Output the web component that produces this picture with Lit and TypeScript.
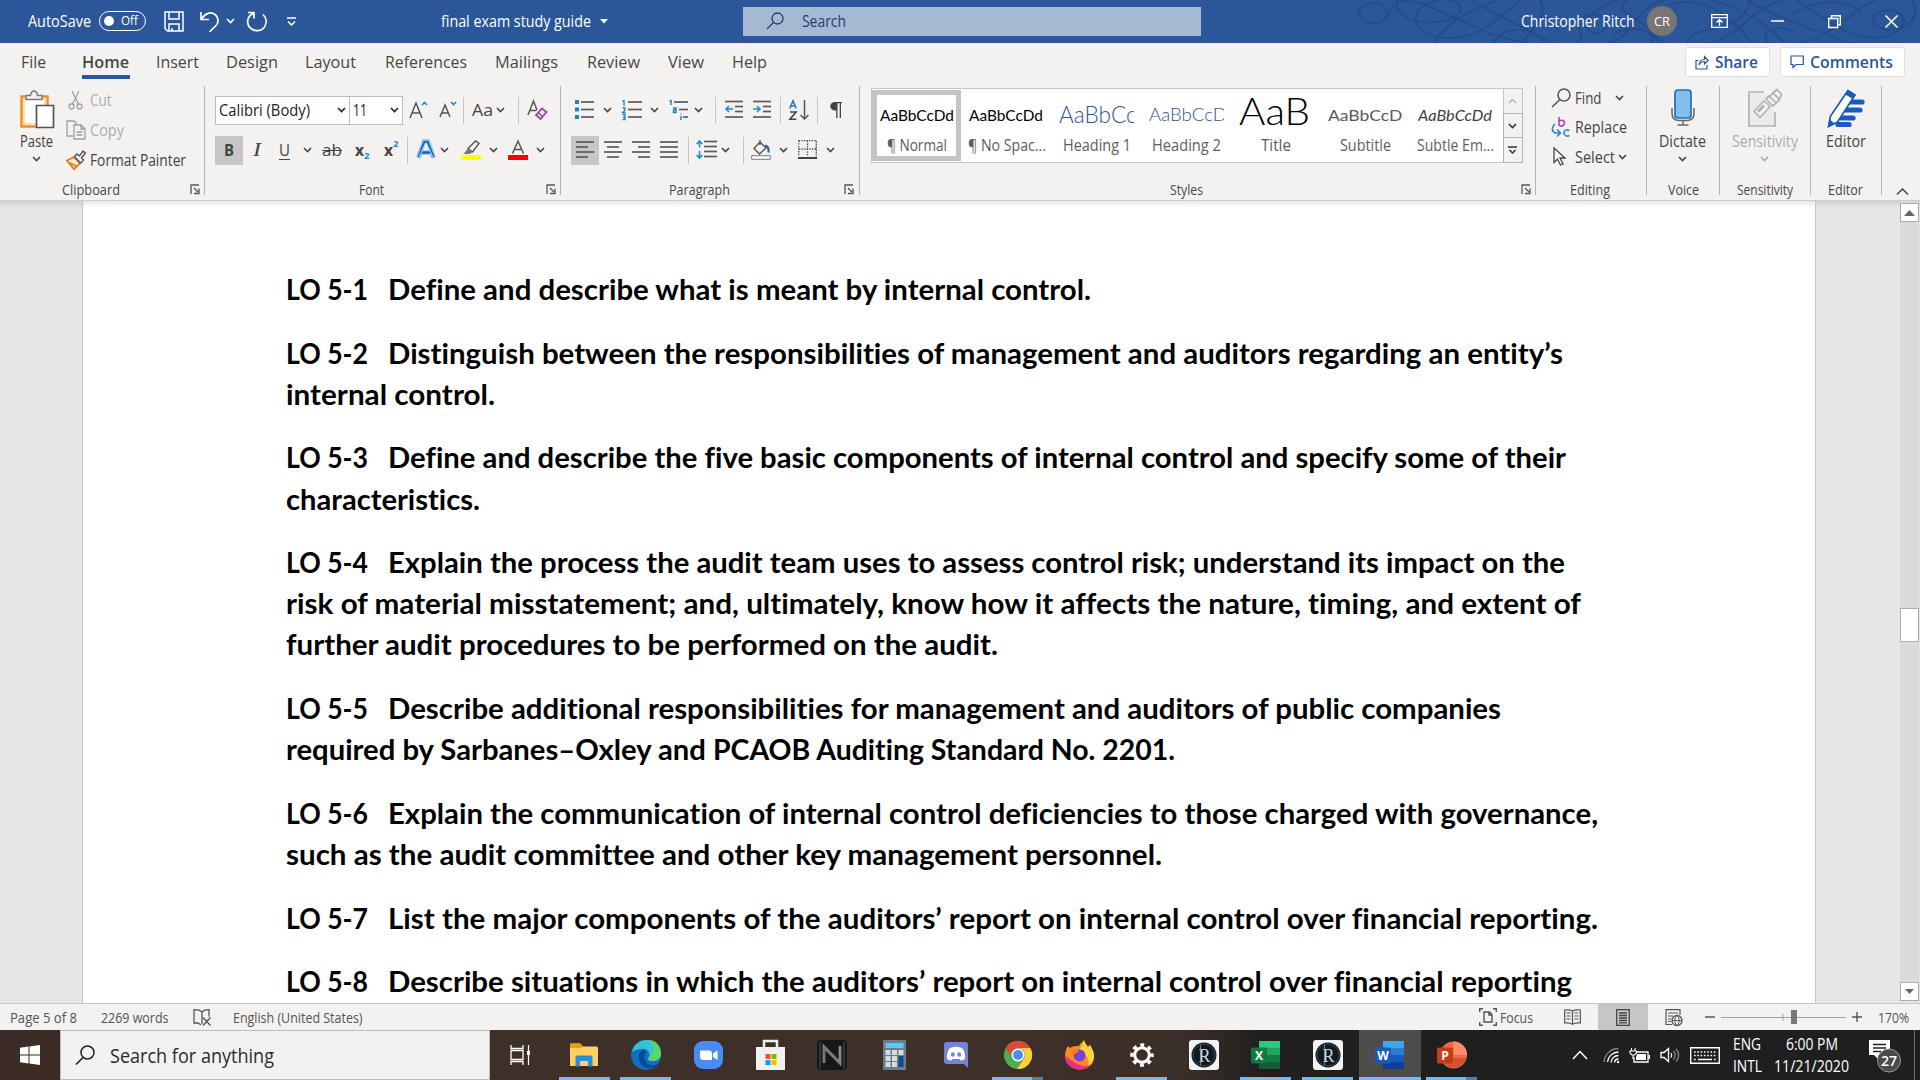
import { LitElement, html, svg, css, unsafeCSS } from "lit";
import { customElement, property, query } from "lit/decorators.js";

/** Grid columns whose items begin at the given x positions, relative to the row's left edge. */
const starts = (...xs: number[]) =>
  unsafeCSS(
    `padding-left:${xs[0]}px;grid-template-columns:${xs
      .slice(1)
      .map((x, i) => `${+(x - xs[i]).toFixed(2)}px`)
      .join(" ")} auto;`
  );

const ic = (w: number, h: number, body: unknown, cls = "") =>
  html`<svg class=${"ic " + cls} width=${w} height=${h} viewBox="0 0 ${w} ${h}" fill="none">${body}</svg>`;

const t = (text: string, w: number, cls = "") => html`<fit-text class=${cls} .w=${w} .text=${text}></fit-text>`;

const chev = (cls = "") => ic(9, 6, svg`<path d="M1 1l3.500 3.500L8 1" stroke="currentColor" stroke-width="1.6"/>`, "chev " + cls);
const launcher = ic(10, 11, svg`<path d="M1 10V1h8M4 4l4 4M9 4.500v5H4" stroke="#555" stroke-width="1.300"/>`);
const sep = html`<i class="sep"></i>`;
const lines = (ls: number[][], c = "#5c5a58") =>
  svg`${ls.map(([x1, x2, y]) => svg`<path d="M${x1} ${y}H${x2}" stroke=${c} stroke-width="1.700"/>`)}`;

/** A single line of text set to an exact advance width. */
@customElement("fit-text")
class FitText extends LitElement {
  @property({ attribute: false }) w = 0;
  @property({ attribute: false }) text = "";
  @query("span") span!: HTMLSpanElement;
  static styles = css`
    :host { display: block; white-space: pre; flex: none; }
    span { display: inline-block; transform-origin: 0 50%; }
    :host(.u) span { text-decoration: underline; text-underline-offset: 3px; }
    :host(.s) span { text-decoration: line-through; }
  `;
  render() {
    return html`<span>${this.text}</span>`;
  }
  updated() {
    this.style.width = this.w + "px";
    this.span.style.transform = "none";
    const natural = this.span.getBoundingClientRect().width;
    if (natural) this.span.style.transform = `scaleX(${this.w / natural})`;
  }
}

const base = css`
  :host { display: block; font-family: "Open Sans", "Noto Sans", sans-serif; font-size: 15.8px; color: #444; }
  * { box-sizing: border-box; }
  .ic { display: block; flex: none; overflow: visible; }
  .row { display: grid; align-items: center; }
  .sep { display: block; width: 1px; height: 27px; background: #c8c6c4; }
`;

@customElement("title-bar")
class TitleBar extends LitElement {
  static styles = [
    base,
    css`
      :host { position: relative; height: 43px; background: #2b579a; color: #fff; font-size: 15.5px; }
      .swirl { position: absolute; right: 0; top: 0; width: 720px; height: 43px; }
      .row { position: relative; height: 42px; ${starts(28, 99, 164, 200, 226, 246, 286, 441, 600, 743, 1520.5, 1647, 1711, 1771, 1828, 1884.5)} }
      .row > fit-text { margin-top: -1px; }
      .toggle { width: 47px; height: 20px; border: 1.5px solid #fff; border-radius: 11px; display: flex; align-items: center; gap: 7px; padding-left: 4px; font-size: 12.5px; margin-top: -1px; }
      .knob { width: 10px; height: 10px; border-radius: 50%; background: #fff; }
      .search { width: 458px; height: 29px; background: #a6b9d3; display: flex; align-items: center; gap: 18px; padding-left: 23px; padding-bottom: 1px; color: #1d3e72; margin-top: 1px; }
      .avatar { width: 30px; height: 30px; border-radius: 50%; background: #7a7574; display: flex; align-items: center; justify-content: center; font-size: 13.5px; }
    `,
  ];
  render() {
    return html`
      <svg class="swirl" viewBox="0 0 1568 129" preserveAspectRatio="none" fill="none" stroke="#244c87" stroke-width="5">
        <path d="M405 40c0-45-58-38-58 0s50 42 62 2c10-34 30-50 75-30 90 45 130 95 230 117"/>
        <path d="M430 0c-10 60 60 80 110 60 55-25 20-75-25-60-45 20-60 60-30 90 40 40 110 30 160-30l55-60"/>
        <path d="M510 129c20-50 60-90 140-129M590 0c80 60 120 90 180 129M700 129c30-50 60-90 40-129M640 129c10-45 90-60 110 0"/>
        <path d="M820 129c30-30-20-60 20-80s60 30 30 50c-30 10-60-50 40-99M890 129c60-20 40-90 120-129"/>
        <path d="M930 0c-40 50 40 40 70 129M900 110c30-50 110-10 80 19M1010 20c70-40 140 10 190 109M1060 129c10-60 120-20 140-129"/>
        <path d="M1110 0c60 20 130 70 160 129M1270 0c-80 30-70 90-160 129M1190 0c30 30 160 100 230 129M1235 129c-20-45 40-60 60-30"/>
        <path d="M1300 0c60 60 130 129 190 110 60-20 50-80 10-80s-50 50 0 60c50 0 70-50 50-90M1470 0c-60 40-110 129-170 129M1290 40c60-50 130-40 150 0"/>
      </svg>
      <div class="row">
        ${t("AutoSave", 63)}
        <div class="toggle"><i class="knob"></i>${t("Off", 17)}</div>
        ${ic(20, 21, svg`<path d="M1 1h18v19H3.500L1 17.500zM5 1v7h10V1M5 20v-7h10v7" stroke="#fff" stroke-width="1.500"/><path d="M8 20v-3" stroke="#fff" stroke-width="1.500"/>`)}
        ${ic(19, 21, svg`<path d="M1 1v7.500h8M1.500 8C5 2 11 .5 15 3.500s4 8 1 11L9.500 21" stroke="#fff" stroke-width="1.700"/>`)}
        ${chev()}
        ${ic(22, 21, svg`<path d="M2 1.500h6v6M7.500 2.200C2 4.500.5 10 2.500 14.500c3 6 12 7 16 1.500 2.500-4 2.200-9-1.500-12.500" stroke="#fff" stroke-width="1.700"/>`)}
        ${ic(11, 9, svg`<path d="M1 1h9M2 4.500l3.500 3.500L9 4.500" stroke="#fff" stroke-width="1.400"/>`)}
        ${t("final exam study guide", 150)}
        ${ic(8, 5, svg`<path d="M0 0h8L4 4.500z" fill="#fff"/>`)}
        <div class="search">
          ${ic(18, 18, svg`<circle cx="11.500" cy="6.500" r="5.500" stroke="#1d3e72" stroke-width="1.300"/><path d="M7.500 10.500L1 17" stroke="#1d3e72" stroke-width="1.300"/>`)}
          ${t("Search", 44)}
        </div>
        ${t("Christopher Ritch", 113.5)}
        <div class="avatar">${t("CR", 16)}</div>
        ${ic(17, 14, svg`<path d="M.7.7h15.600v12.600H.7zM.7 3.700h15.600M8.500 12V6M5.500 8.500l3-3 3 3" stroke="#fff" stroke-width="1.300"/>`)}
        ${ic(13, 2, svg`<path d="M0 1h13" stroke="#fff" stroke-width="1.500"/>`)}
        ${ic(13, 13, svg`<path d="M.7 3.500h9v9h-9zM3.500 3.500V.7h8.800v9H9.700" stroke="#fff" stroke-width="1.400"/>`)}
        ${ic(13, 13, svg`<path d="M.5.5l12 12M12.500.5l-12 12" stroke="#fff" stroke-width="1.500"/>`)}
      </div>
    `;
  }
}

@customElement("tab-strip")
class TabStrip extends LitElement {
  static styles = [
    base,
    css`
      :host { height: 39px; font-size: 16.6px; color: #484644; }
      .row { height: 38px; ${starts(21, 82, 156, 226, 305, 385, 495, 587, 668, 732, 1685, 1780)} }
      .on, .tab { margin-top: -2px; }
      .on { font-weight: 600; display: flex; flex-direction: column; position: relative; }
      .on::after { content: ""; position: absolute; left: 0; bottom: -6px; width: 48px; height: 4px; background: #2b579a; }
      .btn { height: 30px; background: #fff; border: 1px solid #e1dfdd; border-radius: 3px; display: flex; align-items: center; gap: 6px; padding-left: 9px; color: #2b579a; font-weight: 600; font-size: 16px; }
      .btn fit-text { margin-top: -1px; }
      .share { width: 85px; }
      .comments { width: 125px; }
    `,
  ];
  render() {
    const tabs: [string, number][] = [["File", 25], ["Home", 47], ["Insert", 43], ["Design", 52], ["Layout", 51], ["References", 82], ["Mailings", 63], ["Review", 53], ["View", 36], ["Help", 35]];
    return html`<div class="row">
      ${tabs.map(([n, w]) => html`<div class=${n === "Home" ? "on" : "tab"}>${t(n, w)}</div>`)}
      <div class="btn share">
        ${ic(14, 15, svg`<path d="M3.500 5.500H1V14h11v-4M4 10c.5-4 3-5.500 5.500-5.500V1.500L13.200 5.500 9.500 9V6.500C7 6.500 5.500 7.500 4 10z" stroke="#2b579a" stroke-width="1.200"/>`)}${t("Share", 43)}
      </div>
      <div class="btn comments">
        ${ic(14, 14, svg`<path d="M1 1h12.300v8.500H6L3 12.500v-3H1z" stroke="#2b579a" stroke-width="1.200"/>`)}${t("Comments", 83)}
      </div>
    </div>`;
  }
}

@customElement("ribbon-body")
class RibbonBody extends LitElement {
  static styles = [
    base,
    css`
      :host { height: 118px; padding-top: 4px; border-bottom: 0; font-size: 15.6px; }
      .groups { display: grid; height: 109px; grid-template-columns: 205px 356px 298.500px 676.500px 110.500px 73px 91.500px 71px auto; }
      .group { border-right: 1px solid #b8b6b4; display: grid; grid-template-rows: 95px 13px; min-width: 0; }
      .last { border: 0; display: flex; align-items: flex-end; padding: 0 0 0 14px; }
      .label { display: flex; height: 17px; align-items: center; font-size: 13.7px; color: #4a4846; }
      .c1 { padding-left: 62px; } .c2 { padding-left: 154px; } .c3 { padding-left: 108px; } .c4 { padding-left: 310px; }
      .c5 { padding-left: 34px; } .c6 { padding-left: 21px; } .c7 { padding-left: 17px; } .c8 { padding-left: 17px; }
      .label .ic { margin-left: auto; margin-right: 4.500px; }
      .clip { display: grid; grid-template-columns: 66px auto; }
      .big { display: flex; flex-direction: column; align-items: center; }
      .paste { padding: 4px 0 0 7px; }
      .big fit-text { height: 20px; line-height: 20px; }
      .clipboard { margin-bottom: 3px; }
      .big .chev { margin-top: 5px; }
      .mini { margin-top: -1px; height: 90px; display: grid; grid-template-rows: repeat(3, 30px); }
      .mini .row { ${starts(0, 24)} }
      .off { color: #aeacaa; }
      .two { padding-top: 10px; display: grid; grid-template-rows: 29px 29px; row-gap: 11px; }
      .two .row > .ic, .two .row > fit-text, .x { margin-top: -1.500px; }
      .two .row > .chev { margin-left: -1px; }
      .f1 { ${starts(10, 144, 203.5, 233.5, 258, 267, 292, 313, 321.5)} }
      .f2 { ${starts(10, 48, 74, 99, 117, 150, 179, 201.5, 210.5, 236, 256, 285, 303, 332)} }
      .p1 { ${starts(14, 43, 60.5, 90, 108, 134, 154, 164, 191.5, 219, 228, 256, 269)} }
      .p2 { ${starts(10, 43, 71, 99, 126.5, 135, 161, 181.5, 190, 219, 237, 266)} }
      .box { height: 29px; background: #fff; border: 1px solid #bebcba; display: flex; align-items: center; justify-content: space-between; padding: 0 3px 1px; color: #222; }
      .face { width: 135px; } .size { width: 54px; }
      .press { width: 28px; height: 29px; background: #c8c6c4; display: flex; align-items: center; justify-content: center; padding-bottom: 2px; }
      .b { font-weight: 700; } .i { font-style: italic; font-family: "Liberation Serif", serif; font-size: 19px; }
      .x { display: flex; align-items: center; font-weight: 700; font-size: 16px; }
      .x small { color: #1e8bcd; font-size: 9.5px; line-height: 10px; }
      .sub { align-self: flex-end; } .sup { align-self: flex-start; }
      .styles { display: flex; padding: 2px 0 0 11px; align-items: flex-start; }
      .gallery { display: flex; height: 75px; width: 633px; background: #fff; border: 1px solid #c8c6c4; padding-top: 1px; }
      .style { width: 89.8px; height: 71px; flex: none; padding: 8px 0 0 8px; display: flex; flex-direction: column; }
      .style.sel { outline: 5px solid #c6c4c2; outline-offset: -5px; }
      .pv { width: 75px; height: 29px; overflow: hidden; font-family: Lato, "Open Sans", sans-serif; color: #000; font-variant-ligatures: none; }
      .pv fit-text { height: 29px; }
      .nm { display: flex; justify-content: center; width: 75px; color: #605e5c; font-size: 15.4px; line-height: 20px; margin-top: 8.500px; }
      .n { font-size: 15px; line-height: 34.500px; }
      .h1 { font-size: 22.5px; font-weight: 300; color: #2f5496; line-height: 33px; }
      .h2 { font-size: 18.5px; font-weight: 300; color: #2f5496; line-height: 33px; }
      .ti { font-size: 38px; font-weight: 300; line-height: 25px; }
      .st { font-size: 14.800px; color: #5a5a5a; line-height: 34.500px; }
      .em { font-size: 15px; font-style: italic; color: #404040; line-height: 34.500px; }
      .scroll { width: 20px; height: 75px; margin-left: -1px; display: grid; grid-template-rows: 26px 24px 25px; }
      .scroll div { border: 1px solid #b4b2b0; margin-top: -1px; display: flex; align-items: center; justify-content: center; color: #333; }
      .scroll .off { color: #b8b6b4; border-color: #c8c6c4; margin-top: 0; }
      .edit { margin-top: -3px; display: grid; grid-template-rows: repeat(3, 29.5px); height: 90px; }
      .e { ${starts(14.5, 38.500, 79)} }
      .e3 { ${starts(17, 38.500, 82)} }
      .tall { padding-top: 3px; }
      .tall .pic { height: 42px; display: flex; align-items: flex-start; }
    `,
  ];
  render() {
    const dropA = (up: boolean) => svg`<path d=${up ? "M13 4l2.500-2.500L18 4" : "M12 1l2.500 2.500L17 1"} stroke="#1e8bcd" stroke-width="1.700"/>`;
    const align = (r: number[][]) => ic(18, 17, lines(r));
    const styles: [string, string, number, string, number][] = [
      ["n", "AaBbCcDd", 74, "¶ Normal", 60], ["n", "AaBbCcDd", 74, "¶ No Spac...", 78], ["h1", "AaBbCcDd", 107, "Heading 1", 68],
      ["h2", "AaBbCcDd", 88, "Heading 2", 69], ["ti", "AaB", 71, "Title", 30], ["st", "AaBbCcDd", 84, "Subtitle", 51], ["em", "AaBbCcDd", 74, "Subtle Em...", 77],
    ];
    return html`<div class="groups">
      <div class="group">
        <div class="clip">
          <div class="big paste">
            ${ic(34, 38, svg`<path d="M1.500 6.500h26v30h-26z" fill="#fff" stroke="#e8912d" stroke-width="2.500"/><path d="M4 9h21v25H4z" stroke="#fbe0a8" stroke-width="2"/><path d="M6 9.500V5.500h4.500C11 2.500 12.500 1 14 1s3 1.500 3.500 4.500H22v4z" fill="#f3f2f1" stroke="#777" stroke-width="1.400"/><path d="M16.500 15.500h17v22h-17z" fill="#fff" stroke="#555" stroke-width="1.700"/>`, "clipboard")}
            ${t("Paste", 33)} ${chev()}
          </div>
          <div class="mini">
            <div class="row off">${ic(18, 20, svg`<path d="M6 1l6.500 13M13 1L6.500 14" stroke="#a19f9d" stroke-width="1.300"/><circle cx="5.500" cy="16.500" r="2.500" stroke="#a19f9d" stroke-width="1.300"/><circle cx="13.500" cy="16.500" r="2.500" stroke="#a19f9d" stroke-width="1.300"/>`)}${t("Cut", 21.5)}</div>
            <div class="row off">${ic(20, 20, svg`<path d="M7 16H1V1h7l3 3" stroke="#a19f9d" stroke-width="1.300"/><path d="M8 5h7l4 4v10H8zM15 5v4h4M10.500 12h6M10.500 15h6" stroke="#a19f9d" stroke-width="1.300"/>`)}${t("Copy", 34)}</div>
            <div class="row">${ic(20, 20, svg`<path d="M1 10.500L8 7l6 6-6 6.200z" fill="#fdebd0" stroke="#e07a1f" stroke-width="1.800"/><path d="M4 13l6 3" stroke="#e07a1f" stroke-width="1.500"/><path d="M8.500 6.500l2.500-2.500 2.500 2L17 1l2.500 2L15.500 8l2 2-3 3.200z" fill="#f3f2f1" stroke="#555" stroke-width="1.400"/>`)}${t("Format Painter", 96)}</div>
          </div>
        </div>
        <div class="label c1">${t("Clipboard", 58)}${launcher}</div>
      </div>

      <div class="group">
        <div class="two">
          <div class="row f1">
            <div class="box face">${t("Calibri (Body)", 91)}${chev()}</div>
            <div class="box size">${t("11", 14)}${chev()}</div>
            ${ic(19, 18, svg`<path d="M1 17L7 2l6 15M3.200 12h7.600" stroke="#555" stroke-width="1.500"/>${dropA(true)}`)}
            ${ic(18, 18, svg`<path d="M1 16L6 4l5 12M2.800 12h6.400" stroke="#555" stroke-width="1.500"/>${dropA(false)}`)}
            ${sep}
            ${t("Aa", 21)} ${chev()} ${sep}
            ${ic(21, 20, svg`<path d="M1 15L6.500 1 10 10M3 10.500h6.500" stroke="#555" stroke-width="1.500"/><path d="M9 15l6-6.500 4.500 3.500-6 7z" fill="#f7e6f7" stroke="#9b3fa5" stroke-width="1.700"/><path d="M11 12.500l4.500 4" stroke="#9b3fa5" stroke-width="1.500"/>`)}
          </div>
          <div class="row f2">
            <div class="press b">${t("B", 10)}</div>
            ${t("I", 8, "i")} ${t("U", 11, "u")} ${chev()} ${t("ab", 20, "s")}
            <div class="x">${t("x", 9)}<small class="sub">2</small></div>
            <div class="x">${t("x", 9)}<small class="sup">2</small></div>
            ${sep}
            ${ic(20, 19, svg`<path d="M2.500 17.500L8 1.500h4l5.500 16M5.500 12.500h9" stroke="#9fd0f0" stroke-width="5"/><path d="M2.500 17.500L8.500 2h3l6 15.500M5.500 12.500h9" stroke="#1567b3" stroke-width="2.500"/><path d="M3 17.500L9.500 3h1L17 17.500" stroke="#f3f9fd" stroke-width=".8"/>`)}
            ${chev()}
            ${ic(20, 20, svg`<path d="M7 8.500L14.500 1 18 3.500 11.500 12z" fill="#f3f2f1" stroke="#555" stroke-width="1.400"/><path d="M7 8.500l4.500 3.500L9 14H2.500z" fill="#777"/><path d="M0 15h20v5H0z" fill="#ff0"/>`)}
            ${chev()}
            ${ic(20, 20, svg`<path d="M4.500 13.500L10 1l5.500 12.500M6.300 9.500h7.400" stroke="#555" stroke-width="1.500"/><path d="M0 15h20v5H0z" fill="#f00"/>`)}
            ${chev()}
          </div>
        </div>
        <div class="label c2">${t("Font", 25)}${launcher}</div>
      </div>

      <div class="group">
        <div class="two">
          <div class="row p1">
            ${ic(19, 19, svg`<path d="M0 0h4v4H0zM0 7.500h4v4H0zM0 15h4v4H0z" fill="#1e7fc0"/>${lines([[6, 19, 2], [6, 19, 9.5], [6, 19, 17]])}`)} ${chev()}
            ${ic(20, 20, svg`<path d="M.5 1.500L2 .5V6M.5 8h2.500v2L.7 12.500h2.800M.5 14.500h2.500v5H.5M1 17h2" stroke="#1e7fc0" stroke-width="1.300"/>${lines([[6, 20, 2], [6, 20, 9.5], [6, 20, 17]])}`)} ${chev()}
            ${ic(19, 20, svg`<path d="M.5 1.500L2 .5V5M4 8h3v4.500H4.500V10H7M12 13.500v1M12 16v4" stroke="#1e7fc0" stroke-width="1.400"/>${lines([[5, 19, 2], [10, 19, 9.5], [14, 19, 17]])}`)} ${chev()}
            ${sep}
            ${ic(18, 19, svg`${lines([[0, 18, 1.5], [10, 18, 6.5], [10, 18, 11.5], [0, 18, 17]])}<path d="M8 9H1M4 6L1 9l3 3" stroke="#1e8bcd" stroke-width="1.600"/>`)}
            ${ic(18, 19, svg`${lines([[0, 18, 1.5], [10, 18, 6.5], [10, 18, 11.5], [0, 18, 17]])}<path d="M0 9h7M4 6l3 3-3 3" stroke="#1e8bcd" stroke-width="1.600"/>`)}
            ${sep}
            ${ic(20, 20, svg`<path d="M.8 8.500L4 .8l3.200 7.700M2 6h4" stroke="#1e7fc0" stroke-width="1.600"/><path d="M1 12h6l-6 7.200h6.300" stroke="#444" stroke-width="1.600"/><path d="M15.500 0v19M11.500 15l4 4 4-4" stroke="#555" stroke-width="1.500"/>`)}
            ${sep}
            ${ic(12, 16, svg`<path d="M5.500 0H12v1.300h-1V16H9.700V1.300H7.500V16H6.200V8.500C2 8.500.3 6.500.3 4.200S2 0 5.500 0z" fill="#444"/>`)}
          </div>
          <div class="row p2">
            <div class="press">${align([[0, 18, 1], [0, 12, 6], [0, 18, 11], [0, 12, 16]])}</div>
            ${align([[0, 18, 1], [3, 15, 6], [0, 18, 11], [3, 15, 16]])}
            ${align([[0, 18, 1], [6, 18, 6], [0, 18, 11], [6, 18, 16]])}
            ${align([[0, 18, 1], [0, 18, 6], [0, 18, 11], [0, 18, 16]])}
            ${sep}
            ${ic(21, 19, svg`<path d="M3.500 1v6.500M3.500 11v7M.7 4l2.800-3 2.800 3M.7 15l2.800 3 2.800-3" stroke="#1e8bcd" stroke-width="1.600"/>${lines([[8, 21, 1.5], [8, 21, 6.5], [8, 21, 11.5], [8, 21, 16.5]])}`)} ${chev()} ${sep}
            ${ic(20, 20, svg`<path d="M9 2l6 6-6.500 6L3 8.500zM9 5V0" fill="#f3f2f1" stroke="#555" stroke-width="1.400"/><path d="M14 5.500c3 .5 4 3 3.500 7" stroke="#1567b3" stroke-width="2.200"/><path d="M.7 15.700h18.600v3.600H.7z" fill="#fff" stroke="#777"/>`)} ${chev()}
            ${ic(19, 19, svg`<path d="M.7.7h17.600v14M.7.7V16M9.500 1v15M1 9h17M18.300 1v16" stroke="#444" stroke-width="1.300" stroke-dasharray="1.300 1.300"/><path d="M0 18h19" stroke="#444" stroke-width="2"/>`)} ${chev()}
          </div>
        </div>
        <div class="label c3">${t("Paragraph", 61)}${launcher}</div>
      </div>

      <div class="group">
        <div class="styles">
          <div class="gallery">
            ${styles.map(([c, p, w, n, nw], i) => html`<div class="style ${i ? "" : "sel"}"><div class="pv">${t(p, w, c)}</div><div class="nm">${t(n, nw)}</div></div>`)}
          </div>
          <div class="scroll">
            <div class="off">${ic(9, 6, svg`<path d="M1 5l3.500-3.500L8 5" stroke="currentColor" stroke-width="1.500"/>`)}</div>
            <div>${chev()}</div>
            <div>${ic(9, 9, svg`<path d="M0 1h9M1.500 4l3 3 3-3" stroke="currentColor" stroke-width="1.500"/>`)}</div>
          </div>
        </div>
        <div class="label c4">${t("Styles", 33)}${launcher}</div>
      </div>

      <div class="group">
        <div class="edit">
          <div class="row e">${ic(20, 20, svg`<circle cx="13" cy="7" r="6" stroke="#555" stroke-width="1.500"/><path d="M9 11.500L1 19" stroke="#555" stroke-width="1.700"/>`)}${t("Find", 26.5)}${chev()}</div>
          <div class="row e">${ic(19, 20, svg`<path d="M8 0v9M8 4.500c2-2 5.500-1.500 5.500 1.500S10 10 8 8" stroke="#a846b0" stroke-width="1.600"/><path d="M18.500 13.500c-3-1.500-5.500-.3-5.500 2.500s3 4 5.500 2.500M4 7C1 9 0 14 4 16h5M6 12.500L9.500 16 6 19.500" stroke="#1e8bcd" stroke-width="1.600"/>`)}${t("Replace", 52)}</div>
          <div class="row e3">${ic(13, 19, svg`<path d="M1 1v14.500l3.500-3.500 3 6 2.500-1-3-6h5z" fill="#fff" stroke="#444" stroke-width="1.300"/>`)}${t("Select", 40)}${chev()}</div>
        </div>
        <div class="label c5">${t("Editing", 40)}</div>
      </div>

      <div class="group">
        <div class="big tall">
          <div class="pic">${ic(24, 37, svg`<rect x="4" y="1" width="16" height="28" rx="3" fill="#83beec" stroke="#1e6fb8" stroke-width="1.700"/><path d="M1 19v5c0 5 2.500 7.500 7 7.500h8c4.500 0 7-2.500 7-7.500v-5M12 31.500V36M6.500 36h11" stroke="#666" stroke-width="1.500"/>`)}</div>
          ${t("Dictate", 47)} ${chev()}
        </div>
        <div class="label c6">${t("Voice", 31)}</div>
      </div>

      <div class="group">
        <div class="big tall off">
          <div class="pic">${ic(34, 38, svg`<path d="M16 3H1v34h26V23" fill="#eceaea" stroke="#b5b3b1" stroke-width="1.700"/><path d="M6 22l10-10 6 5.500-10 11z" fill="#f3f2f1" stroke="#b5b3b1" stroke-width="1.600"/><path d="M10 22.500l6-6" stroke="#b5b3b1" stroke-width="3"/><path d="M18 10l7 7 3-3-7-7zM22 7l3-3 6.500 6.500-3.500 3.500M25 4l4-3.500 4.500 5-2.500 5" fill="#f3f2f1" stroke="#b5b3b1" stroke-width="1.700"/>`)}</div>
          ${t("Sensitivity", 66)} ${chev()}
        </div>
        <div class="label c7">${t("Sensitivity", 56)}</div>
      </div>

      <div class="group">
        <div class="big tall">
          <div class="pic">${ic(38, 38, svg`<path d="M22 13h13M19 21h14M15 29h11M11 35.500h11" stroke="#185abd" stroke-width="5.200" stroke-linecap="round"/><path d="M21 1.500l7 4.500L10.500 33 1.500 37.500 3.500 27z" fill="#fff" stroke="#185abd" stroke-width="1.700"/><path d="M21 1.500l7 4.500-2 3.500-7.500-4.500zM1.500 37.500l1.300-6.500 4.200 3.500z" fill="#185abd" stroke="#185abd"/>`)}</div>
          ${t("Editor", 40)}
        </div>
        <div class="label c8">${t("Editor", 35)}</div>
      </div>

      <div class="last">${ic(13, 7, svg`<path d="M1 6.500l5.500-5.500L12 6.500" stroke="#444" stroke-width="1.500"/>`)}</div>
    </div>`;
  }
}

type Line = [string, number];

@customElement("doc-view")
class DocView extends LitElement {
  static styles = [
    base,
    css`
      :host { height: 803px; display: grid; grid-template-columns: 82px 1734px 84px 20px; background: #e6e6e6; overflow: hidden; border-top: 1px solid #cfcdcb; box-shadow: inset 0 6px 6px -4px #c8c8c8; }
      .page { grid-column: 2; background: #fff; border: solid #c6c6c6; border-width: 0 1px; padding: 68px 0 0 203px; font-family: Lato, "Open Sans", sans-serif; font-weight: 700; font-size: 28.200px; font-variant-ligatures: none; color: #000; box-shadow: inset 0 7px 6px -5px #ddd; min-height: 0; }
      .para { margin-bottom: 22.600px; line-height: 41.100px; }
      .line { display: flex; }
      .first { gap: 20px; }
      .bar { grid-column: 4; background: #dadada; width: 19px; height: 800px; display: grid; grid-template-rows: 19px 386px 34px 340px 19px; padding-top: 2px; }
      .bar div { background: #fff; border: 1px solid #ababab; display: flex; align-items: center; justify-content: center; }
      .thumb { grid-row: 3; } .down { grid-row: 5; }
    `,
  ];
  /** Each line is a list of [text, advance width] runs. */
  paras: Line[][][] = [
    [[["Define and describe what is meant by internal control.", 703]]],
    [[["Distinguish between the responsibilities of management and auditors regarding an entity’s", 1175]], [["internal control.", 209]]],
    [[["Define and describe the five basic components of internal control and specify some of their", 1178]], [["characteristics.", 194]]],
    [[["Explain the process the audit team uses to assess control risk; understand its impact on the", 1177]], [["risk of material misstatement; and, ultimately, know how it affects the nature, timing, and extent of", 1295]], [["further audit procedures to be performed on the audit.", 712]]],
    [[["Describe additional responsibilities for management and auditors of public companies", 1113]], [["required by Sarbanes–Oxley and ", 427], ["PCAOB Auditing Standard No. 2201.", 462]]],
    [[["Explain the communication of internal control deficiencies to those charged with governance,", 1210]], [["such as the audit committee and other key management personnel.", 876]]],
    [[["List the major components of the auditors’ report on internal control over financial reporting.", 1210]]],
    [[["Describe situations in which the auditors’ report on internal control over financial reporting", 1184]]],
  ];
  render() {
    return html`
      <div class="page">
        ${this.paras.map(
          (ls, i) => html`<div class="para">
            ${ls.map(
              (runs, j) => html`<div class="line ${j ? "" : "first"}">${j ? "" : t(`LO 5-${i + 1}`, 82)}${runs.map(([s, w]) => t(s, w))}</div>`
            )}
          </div>`
        )}
      </div>
      <div class="bar">
        <div>${ic(11, 6, svg`<path d="M0 6h11L5.500 0z" fill="#666"/>`)}</div>
        <div class="thumb"></div>
        <div class="down">${ic(9, 5, svg`<path d="M0 0h9L4.500 5z" fill="#666"/>`)}</div>
      </div>
    `;
  }
}

@customElement("status-bar")
class StatusBar extends LitElement {
  static styles = [
    base,
    css`
      :host { height: 27px; background: #f3f2f1; border-top: 1px solid #c6c6c6; font-size: 13.800px; color: #555; }
      .row { height: 25px; ${starts(10, 101, 193, 233, 1479, 1500, 1564, 1598, 1664.5, 1705, 1721, 1851.5, 1878)} }
      .view { width: 50px; height: 26px; background: #c8c6c4; display: flex; align-items: center; justify-content: center; }
    `,
  ];
  render() {
    return html`<div class="row">
      ${t("Page 5 of 8", 67)} ${t("2269 words", 67.5)}
      ${ic(18, 17, svg`<path d="M9 3C7 1 4 .7 1 .7V14h4l3 2M9 3c2-2 4-2.300 7-2.300v7M9 3v12M10 8.500l7.500 8M17.500 8.500l-7.500 8" stroke="#555" stroke-width="1.300"/>`)}
      ${t("English (United States)", 129.5)}
      ${ic(18, 18, svg`<path d="M4 .7H.7V4M14 .7h3.300V4M.7 14v3.300H4M17.300 14v3.300H14M5 4h5.500L13 6.500V14H5zM10 4v3h3" stroke="#555" stroke-width="1.400"/>`)}
      ${t("Focus", 33)}
      ${ic(17, 16, svg`<path d="M8.500 2C6 .5 4 .7 .7 1v13c3-.3 5.500-.3 7.800 1.300 2.300-1.600 4.800-1.600 7.800-1.300V1C13 .7 11 .5 8.500 2zV15M2.500 4h4M2.500 7h4M2.500 10h4M10.500 4h4M10.500 7h4M10.500 10h4" stroke="#555" stroke-width="1.200"/>`)}
      <div class="view">${ic(14, 17, svg`<path d="M.7.7h12.600v15.600H.7zM3 4h8M3 6.500h8M3 9h8M3 11.500h8M3 13.800h8" stroke="#444" stroke-width="1.300"/>`)}</div>
      ${ic(18, 17, svg`<path d="M7 15.500H1V.7h14V6M3 4h10M3 7h5M3 10h3M3 12.500h3" stroke="#555" stroke-width="1.200"/><circle cx="12" cy="11.500" r="5" fill="#f3f2f1" stroke="#555" stroke-width="1.300"/><path d="M7 11.500h10M12 6.500c-3 3-3 7 0 10M12 6.500c3 3 3 7 0 10" stroke="#555"/>`)}
      ${ic(10, 2, svg`<path d="M0 1h10" stroke="#555" stroke-width="1.500"/>`)}
      ${ic(125, 14, svg`<path d="M0 7.500h125M62 4v7" stroke="#a0a09f"/><path d="M70 0h6v14h-6z" fill="#777"/>`)}
      ${ic(10, 10, svg`<path d="M0 5h10M5 0v10" stroke="#555" stroke-width="1.400"/>`)}
      ${t("170%", 31)}
    </div>`;
  }
}

const office = (letter: string, c: string[], round = false) =>
  ic(30, 28, svg`
    ${round
      ? svg`<circle cx="16.500" cy="14" r="13.500" fill=${c[1]}/><path d="M16.500.5A13.500 13.500 0 0 1 30 14H16.500z" fill=${c[0]}/><path d="M3.500 17h26.100a13.500 13.500 0 0 1-26.100 0z" fill=${c[2]}/>`
      : svg`<path d="M8 0h21v7H8z" fill=${c[0]}/><path d="M8 7h21v7H8z" fill=${c[1]}/><path d="M8 14h21v7H8z" fill=${c[2]}/><path d="M8 21h21v7H8z" fill=${c[3]}/>`}
    <rect x="0" y="6.500" width="16" height="16" rx="1.500" fill=${c[4]}/>
    <text x="8" y="19" text-anchor="middle" font-family="Open Sans, sans-serif" font-weight="700" font-size="12" fill="#fff">${letter}</text>`);

const ritch = ic(30, 30, svg`<rect width="30" height="30" rx="3" fill="#f2f3f4"/><circle cx="15" cy="15" r="12.500" fill="#0e1a24"/><circle cx="15" cy="15" r="11" stroke="#4b5964" stroke-width=".7"/><text x="15.500" y="21.500" text-anchor="middle" font-family="Liberation Serif, serif" font-size="18" fill="#cfd6da">R</text><path d="M11.500 5v20" stroke="#8d989f" stroke-width=".8"/>`);

@customElement("task-bar")
class TaskBar extends LitElement {
  static styles = [
    base,
    css`
      :host { height: 50px; color: #fff; background: linear-gradient(90deg, #3c2b26 0, #3e3028 500px, #3b3029 1180px, #201f1e 1260px, #1f1f1f 100%); }
      .wrap { display: grid; height: 50px; grid-template-columns: 60px 430px 63.500px repeat(15, 61.950px) auto; }
      .cell { display: flex; align-items: center; justify-content: center; position: relative; }
      .view { padding-right: 3px; }
      .find { background: #f2f2f2; border: 1px solid #bcbcbc; display: flex; align-items: center; gap: 15px; padding-left: 14px; color: #2b2b2b; font-size: 19.500px; }
      .run::after { content: ""; position: absolute; left: 5px; bottom: 0; height: 3px; width: 51px; background: #76b9ed; }
      .multi::after { background: linear-gradient(90deg, #76b9ed 40px, #4f81ab 40px); }
      .now { background: #4d4c4c; }
      .now::after { left: 0; width: 61.950px; }
      .tray { height: 50px; ${starts(89, 120, 147, 177, 207.5, 250, 291, 386, 431)} }
      .two { display: grid; grid-template-rows: 22.500px 22.500px; align-items: center; font-size: 15.500px; justify-items: center; width: 29px; }
      .clock { width: 76px; }
      .edge { width: 1px; height: 50px; background: #6b6b6b; }
    `,
  ];
  render() {
    const apps: [unknown, string][] = [
      [ic(28, 24, svg`<path d="M0 2.500C0 1 .5.5 2 .5h8l2.500 3H26c1.500 0 2 .5 2 2V23H0z" fill="#ffd15c"/><path d="M0 2.500C0 1 .5.5 2 .5h8.500L13 3.500 11 5H0z" fill="#e3a008"/><path d="M5.500 23.500V15c0-2 1-2.500 2.500-2.500h12c1.500 0 2.500.5 2.500 2.500v8.500H18V18h-8v5.500z" fill="#2f8ad8"/>`), "run"],
      [ic(30, 30, svg`<circle cx="15" cy="15" r="15" fill="#0f6fc5"/><path d="M1 12C3 3 10 0 15.500 0 24 0 30 6 30 13.500c0 5-4 7.500-8 7.500-5 0-5.500-2-4-4 1.500-3 0-7-5-8C8 8.500 3 10 1 12z" fill="#35c1d6"/><path d="M17 0c8 0 13 6 13 13.500 0 5-4 7.500-8 7.500-5 0-5.500-2-4-4C25 11 24 4 17 0z" fill="#58d66c"/><path d="M13 9C6 12 6 22 13 27c5 3 11 1 14-3-5 2.500-12 1-13.500-5-.8-3 .5-5.500 1.500-7z" fill="#0a4a94"/>`), "run"],
      [ic(29, 28, svg`<rect width="29" height="28" rx="9" fill="#4a8cf7"/><path d="M6 9.500h9c2 0 3 1 3 3V19H9c-2 0-3-1-3-3zM19 12.500l4.500-3v9.500L19 16z" fill="#fff"/>`), ""],
      [ic(29, 30, svg`<path d="M8 9V1h13v8" stroke="#eee" stroke-width="2.500"/><path d="M0 7h29v23H0z" fill="#f1f1f1"/><path d="M9.500 14h5v5h-5z" fill="#f25022"/><path d="M15.500 14h5v5h-5z" fill="#7fba00"/><path d="M9.500 20h5v5h-5z" fill="#00a4ef"/><path d="M15.500 20h5v5h-5z" fill="#ffb900"/>`), ""],
      [ic(30, 30, svg`<rect width="30" height="30" rx="4" fill="#171717"/><path d="M3 1.500v27M27 1.500v27" stroke="#353535" stroke-width="2"/><path d="M7 23V7l16 16V6" stroke="#8b8b8b" stroke-width="2.800"/><path d="M7 23V7l16 16" stroke="#555" stroke-width=".8"/>`), ""],
      [ic(23, 30, svg`<rect width="23" height="30" rx="1" fill="#6d7c88"/><path d="M2.500 3h18v5h-18z" fill="#4fd0f3"/><path d="M2.500 10h5v5h-5zM9 10h5v5H9zM15.500 10h5v5h-5zM2.500 16h5v5h-5zM9 16h5v5H9zM2.500 22h5v5h-5zM9 22h5v5H9z" fill="#d6dce1"/><path d="M15.500 16h5v11h-5z" fill="#124a8f"/>`), ""],
      [ic(24, 26, svg`<path d="M3 0h18c2 0 3 1 3 3v23l-4-4H3c-2 0-3-1-3-3V3c0-2 1-3 3-3z" fill="#6f85d5"/><path d="M5 7c4-3 10-3 14 0 2 3 2.500 7 2 10-2 1.500-3 1.500-4.500 1.500l-1-1.500h-7l-1 1.500C6 18.500 5 18.500 3 17c-.5-3 0-7 2-10z" fill="#fff"/><ellipse cx="8.800" cy="12.500" rx="2" ry="2.300" fill="#6f85d5"/><ellipse cx="15.200" cy="12.500" rx="2" ry="2.300" fill="#6f85d5"/>`), ""],
      [ic(28, 28, svg`<circle cx="14" cy="14" r="14" fill="#4caf50"/><path d="M1.800 7A14 14 0 0 1 26.200 7H14a7 7 0 0 0-6.500 9.500z" fill="#e0483b"/><path d="M26.200 7A14 14 0 0 1 13 28l7-10.500A7 7 0 0 0 15 7z" fill="#fdd03b"/><circle cx="14" cy="14" r="6.500" fill="#fff"/><circle cx="14" cy="14" r="5" fill="#4c8bf5"/>`), "run multi"],
      [ic(29, 28, svg`<path d="M14 5c1-3 4-4 5-6 1 4 3 5 4 7l2-2c3 5 4 8 4 11 0 8-6 13.500-14 13.500S0 23 0 15c0-4 1-7 3-10l2 2c3-2 6-2 9-2z" fill="#ff8a1e"/><path d="M19-1c1 4 3 5 4 7l2-2c3 5 4 8 4 11 0 5-3 9-6 11 2-8-2-13-8-16 0-5 3-7 4-11z" fill="#ffd43a"/><path d="M0 15c0 8 7 13.500 15 13.500 6 0 11-3 13-7-5 5-9 4-14 2C8 21 3 17 0 15z" fill="#e8308a"/><circle cx="14.500" cy="14.500" r="6" fill="#7a3fe0"/><path d="M5 9c4-2 8 0 9 2-4 0-3 3-6 3z" fill="#ff7a1a"/>`), ""],
      [ic(24, 24, svg`<circle cx="12" cy="12" r="7.300" stroke="#fff" stroke-width="3"/><circle cx="12" cy="12" r="10" stroke="#fff" stroke-width="3.500" stroke-dasharray="3.900 3.950" stroke-dashoffset="2"/>`), "run"],
      [ritch, ""],
      [office("X", ["#33c481", "#21a366", "#107c41", "#185c37", "#0f7b41"]), "run"],
      [ritch, "run"],
      [office("W", ["#41a5ee", "#2b7cd3", "#185abd", "#103f91", "#185abd"]), "run now"],
      [office("P", ["#ff8f6b", "#ed6c47", "#d35230", "", "#c43e1c"], true), "run multi"],
    ];
    return html`<div class="wrap">
      <div class="cell">${ic(20, 20, svg`<path d="M0 2.800L8.500 1.500V9.500H0zM9.500 1.400L20 0v9.500H9.500zM0 10.500h8.500v8L0 17.200zM9.500 10.500H20V20L9.500 18.600z" fill="#fff"/>`)}</div>
      <div class="find">
        ${ic(20, 20, svg`<circle cx="12.500" cy="7.500" r="6.500" stroke="#222" stroke-width="1.500"/><path d="M8 12.500L1 19.500" stroke="#222" stroke-width="1.600"/>`)}
        ${t("Search for anything", 164)}
      </div>
      <div class="cell view">${ic(20, 20, svg`<path d="M1 0v3.500h12V0M1 20v-3.500h12V20M1 5.500h12v9H1z" stroke="#fff" stroke-width="1.300"/><path d="M18.500 0v20" stroke="#fff" stroke-width="1.200"/><path d="M17 6h3v4h-3z" fill="#fff"/>`)}</div>
      ${apps.map(([icon, c]) => html`<div class="cell ${c}">${icon}</div>`)}
      <div class="row tray">
        ${ic(16, 10, svg`<path d="M1 9l7-7.500L15 9" stroke="#fff" stroke-width="1.500"/>`)}
        ${ic(17, 16, svg`<path d="M1 15A14.500 14.500 0 0 1 15.500 1.500" stroke="#888" stroke-width="1.300"/><path d="M4.500 15A11 11 0 0 1 15.500 5M8 15.500A7.500 7.500 0 0 1 15.500 8.500M11.500 15.500a4 4 0 0 1 4-3.500" stroke="#fff" stroke-width="1.300"/><circle cx="15" cy="15" r="1.200" fill="#fff"/>`)}
        ${ic(20, 15, svg`<path d="M6 4h12v10H4V9" stroke="#fff" stroke-width="1.300"/><path d="M7 6h9v6H6V9zM18.500 7H20v4h-1.500z" fill="#fff"/><path d="M1.500 0v3M5 0v3M0 3h6.500v2L4.500 7H2L0 5zM3 7v4" stroke="#fff" stroke-width="1.100"/>`)}
        ${ic(20, 16, svg`<path d="M1 5.500h3L8.500 1.500v13L4 10.500H1z" stroke="#fff" stroke-width="1.300"/><path d="M11 6c1 1.500 1 3 0 4.500" stroke="#fff" stroke-width="1.300"/><path d="M13.500 4c2 2.500 2 6 0 8.500M16 2c3.500 3.500 3.500 9 0 12.500" stroke="#888" stroke-width="1.300"/>`)}
        ${ic(30, 17, svg`<path d="M.7.7h28.600v15.600H.7z" stroke="#fff" stroke-width="1.400"/><path d="M4 5h23M4 8.500h23M4 12.500h2M24 12.500h2" stroke="#fff" stroke-width="1.600" stroke-dasharray="1.600 1.700"/><path d="M8 12.500h14" stroke="#fff" stroke-width="1.500"/>`)}
        <div class="two">${t("ENG", 28)}${t("INTL", 29)}</div>
        <div class="two clock">${t("6:00 PM", 52)}${t("11/21/2020", 75)}</div>
        ${ic(33, 32, svg`<path d="M0 1h21v15h-12v4l-4-4H0z" fill="#fff"/><path d="M4 5.500h13M4 9h13M4 12.500h8" stroke="#222" stroke-width="1.300"/><circle cx="20" cy="21.500" r="11.500" fill="#4b4b4b" stroke="#999"/><text x="20" y="26.500" text-anchor="middle" font-family="Open Sans, sans-serif" font-weight="600" font-size="14" fill="#fff">27</text>`)}
        <i class="edge"></i>
      </div>
    </div>`;
  }
}

@customElement("app-root")
class AppRoot extends LitElement {
  static styles = css`
    :host { display: grid; width: 1920px; height: 1080px; overflow: hidden; background: #f3f2f1; grid-template-rows: 43px 39px 118px 803px 27px 50px; }
    :host > * { min-width: 0; }
  `;
  render() {
    return html`<title-bar></title-bar><tab-strip></tab-strip><ribbon-body></ribbon-body><doc-view></doc-view><status-bar></status-bar><task-bar></task-bar>`;
  }
}
